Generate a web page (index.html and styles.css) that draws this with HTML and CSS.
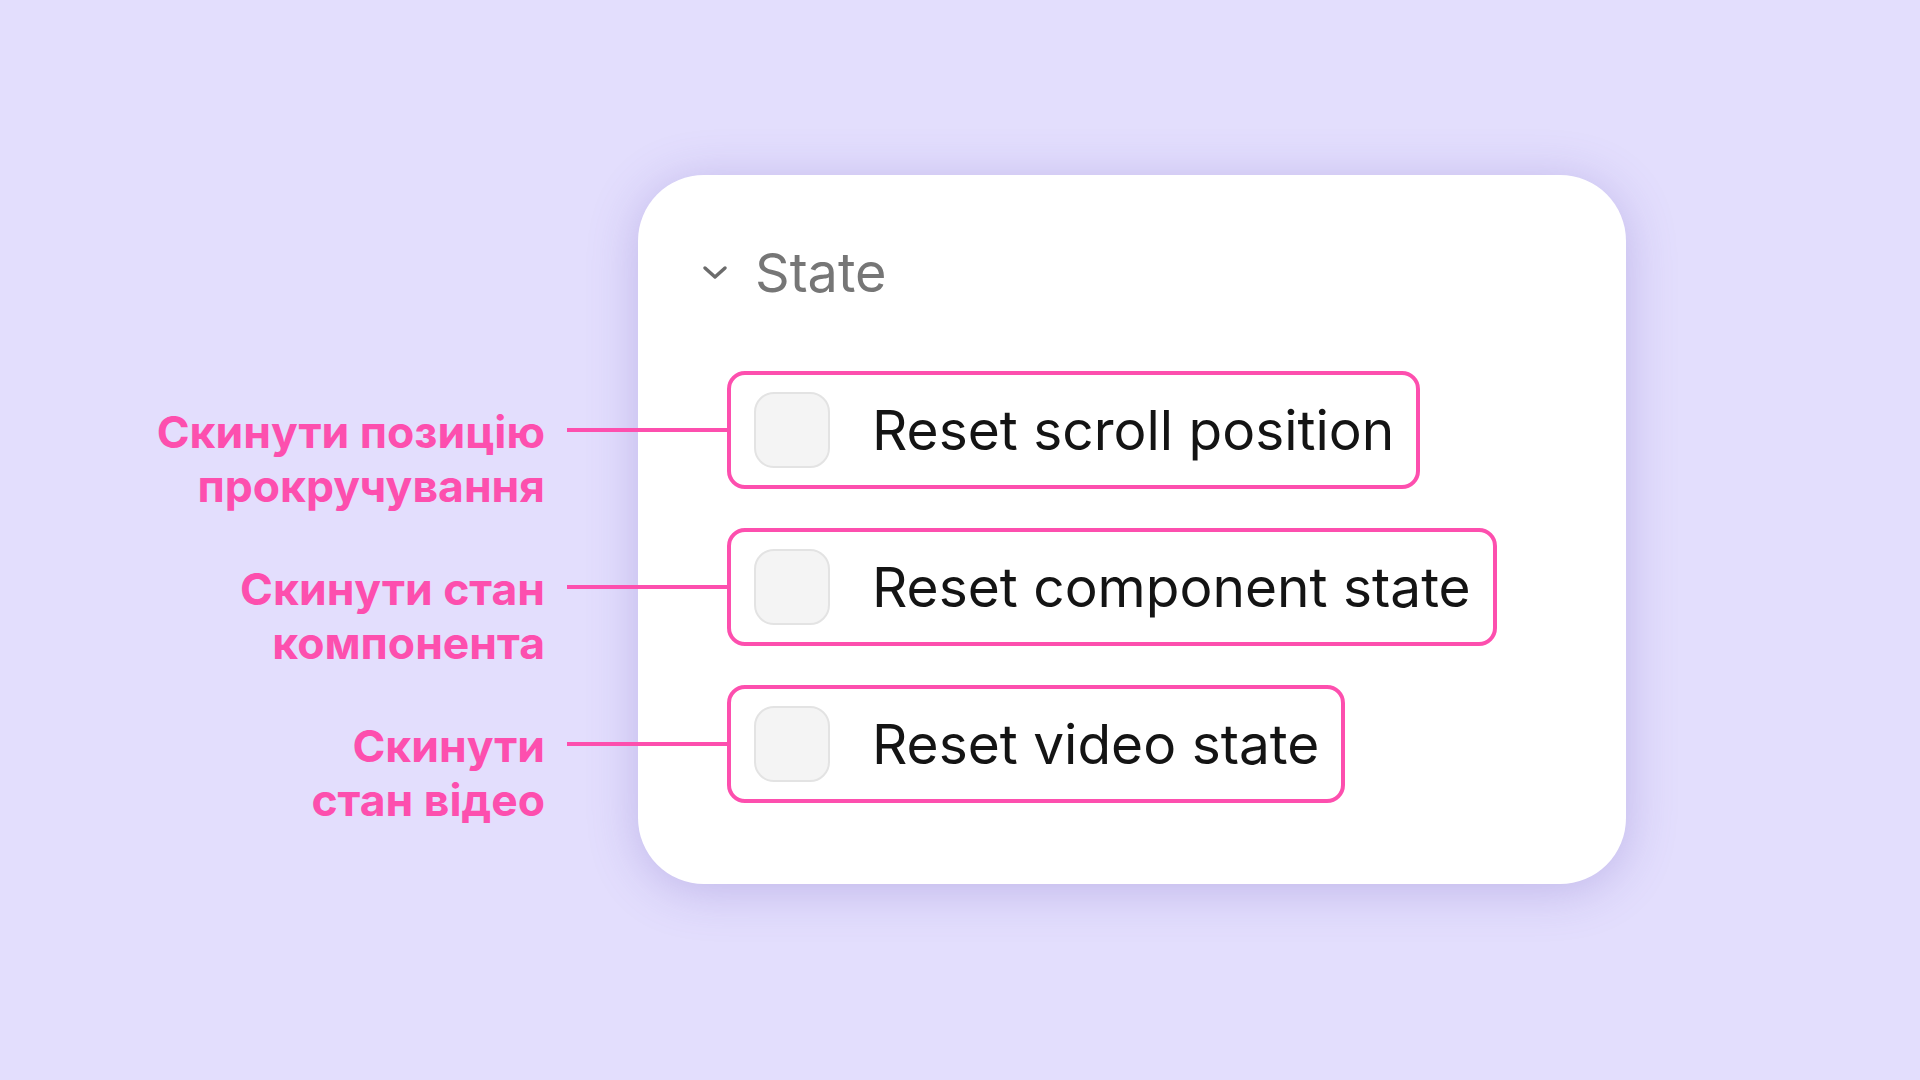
FILE: index.html
```html
<!DOCTYPE html>
<html lang="uk">
<head>
  <meta charset="UTF-8">
  <meta name="viewport" content="width=device-width, initial-scale=1.0">
  <link rel="stylesheet" href="styles.css">
  <title>State</title>
</head>
<body>
  <div class="page">
    <div class="card">
      <div class="section-header">
        <svg class="chevron" width="26" height="16" viewBox="0 0 26 16">
          <path d="M3 3 L13 12 L23 3" fill="none" stroke="#6b6b6b" stroke-width="3.5" stroke-linecap="round" stroke-linejoin="round"/>
        </svg>
        <span class="section-title">State</span>
      </div>

      <div class="options">
        <div class="option">
          <div class="note">
            <span class="note-text">Скинути позицію<br>прокручування</span>
            <span class="note-line"></span>
          </div>
          <span class="checkbox"></span>
          <span class="option-label">Reset scroll position</span>
        </div>

        <div class="option">
          <div class="note">
            <span class="note-text">Скинути стан<br>компонента</span>
            <span class="note-line"></span>
          </div>
          <span class="checkbox"></span>
          <span class="option-label">Reset component state</span>
        </div>

        <div class="option">
          <div class="note">
            <span class="note-text">Скинути<br>стан відео</span>
            <span class="note-line"></span>
          </div>
          <span class="checkbox"></span>
          <span class="option-label">Reset video state</span>
        </div>
      </div>
    </div>
  </div>
</body>
</html>
```

FILE: styles.css
```css
body {
  margin: 0;
  padding: 0;
  background-color: #e3defd;
  font-family: Inter, "Noto Sans", sans-serif;
  height: 100vh;
  overflow: hidden;
}

.page {
  padding: 175px 0 0 638px;
}

.card {
  width: 988px;
  box-sizing: border-box;
  background-color: #fff;
  border-radius: 66px;
  padding: 66px 0 81px 64px;
  box-shadow: 0px 6px 50px rgba(110, 90, 190, 0.3);
}

.section-header {
  display: flex;
  align-items: center;
  gap: 27px;
  height: 64px;
}

.chevron {
  display: block;
}

.section-title {
  font-size: 54px;
  line-height: 64px;
  color: #767676;
}

.options {
  display: flex;
  flex-direction: column;
  align-items: flex-start;
  gap: 39px;
  margin: 66px 0 0 25px;
}

.option {
  position: relative;
  display: flex;
  align-items: center;
  gap: 42px;
  padding: 17px 22px 17px 23px;
  border: 4px solid #fd4fae;
  border-radius: 18px;
}

.checkbox {
  width: 72px;
  height: 72px;
  background-color: #f4f4f4;
  border: 2px solid #e3e3e3;
  border-radius: 20px;
}

.option-label {
  font-size: 55px;
  line-height: 64px;
  color: #141414;
}

/* callout to the left of the card */
.note {
  position: absolute;
  right: 100%;
  top: calc(50% - 25px);
  display: flex;
  align-items: flex-start;
  gap: 22px;
  margin-right: 4px;
}

.note-text {
  font-family: Inter, sans-serif;
  font-weight: 700;
  font-size: 44.5px;
  line-height: 54px;
  color: #fd4fae;
  text-align: right;
  white-space: nowrap;
}

.note-line {
  width: 160px;
  height: 4px;
  margin-top: 23px;
  background-color: #fd4fae;
}
```
